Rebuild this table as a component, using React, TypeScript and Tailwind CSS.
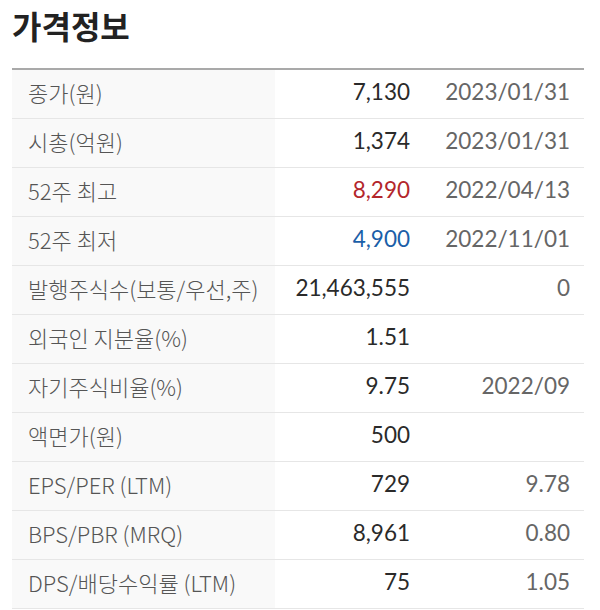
import React from "react";

const rows: { label: string; v: string; d: string; vc?: string }[] = [
  { label: "종가(원)", v: "7,130", d: "2023/01/31" },
  { label: "시총(억원)", v: "1,374", d: "2023/01/31" },
  { label: "52주 최고", v: "8,290", d: "2022/04/13", vc: "text-[#b3262b]" },
  { label: "52주 최저", v: "4,900", d: "2022/11/01", vc: "text-[#1b5fa8]" },
  { label: "발행주식수(보통/우선,주)", v: "21,463,555", d: "0" },
  { label: "외국인 지분율(%)", v: "1.51", d: "" },
  { label: "자기주식비율(%)", v: "9.75", d: "2022/09" },
  { label: "액면가(원)", v: "500", d: "" },
  { label: "EPS/PER (LTM)", v: "729", d: "9.78" },
  { label: "BPS/PBR (MRQ)", v: "8,961", d: "0.80" },
  { label: "DPS/배당수익률 (LTM)", v: "75", d: "1.05" },
];

export default function App() {
  return (
    <div className="w-[600px] h-[610px] bg-white overflow-hidden">
      <h1 className="pl-[12px] pt-[3px] h-[68px] text-[32px] font-bold text-[#222] leading-[44px] font-['Noto_Sans_CJK_KR',sans-serif]">
        가격정보
      </h1>
      <div className="ml-[12px] w-[572px] border-t-2 border-[#a9a9a9]">
        {rows.map((r, i) => (
          <div key={i} className="flex h-[49px] border-b border-[#e6e6e6]">
            <div className="w-[263px] bg-[#f9f9f9] flex items-center pl-[16px] pb-[4px] text-[22px] font-light text-[#555] whitespace-nowrap font-['Noto_Sans_CJK_KR',sans-serif]">
              {r.label}
            </div>
            <div
              className={`w-[135px] flex items-center justify-end pb-[4px] text-[22.5px] font-['Lato',sans-serif] ${r.vc ?? "text-[#2a2a2a]"}`}
            >
              {r.v}
            </div>
            <div className="flex-1 flex items-center justify-end pr-[14px] pb-[4px] text-[22.5px] text-[#666] font-['Lato',sans-serif]">
              {r.d}
            </div>
          </div>
        ))}
      </div>
    </div>
  );
}
